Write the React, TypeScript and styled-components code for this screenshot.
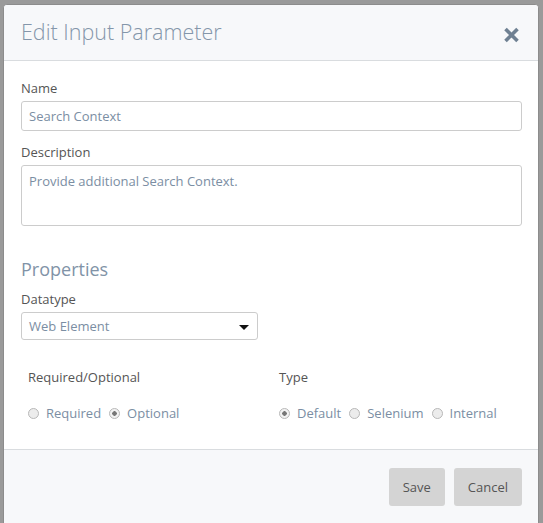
import React from 'react'
import styled, { createGlobalStyle } from 'styled-components'

const GlobalStyle = createGlobalStyle`
  body {
    margin: 0;
    background: #9a9a9a;
    font-family: 'Open Sans', 'Liberation Sans', sans-serif;
  }
`

const Radio: React.FC<{ label: string; checked?: boolean }> = ({ label, checked }) => (
  <RadioItem>
    <RadioDot checked={checked} />
    <RadioText>{label}</RadioText>
  </RadioItem>
)

export default function App() {
  return (
    <>
      <GlobalStyle />
      <Modal>
        <Header>
          <Title>Edit Input Parameter</Title>
          <Close aria-label='close'>
            <svg width='17' height='16' viewBox='0 0 17 16'>
              <path d='M2.5 2 L14.5 14 M14.5 2 L2.5 14' stroke='#6f8092' strokeWidth='3.6' strokeLinecap='butt' />
            </svg>
          </Close>
        </Header>
        <Body>
          <Label>Name</Label>
          <TextInput defaultValue='Search Context' />
          <Label>Description</Label>
          <TextArea defaultValue='Provide additional Search Context.' />
          <Section>Properties</Section>
          <Label>Datatype</Label>
          <Select>
            <span>Web Element</span>
            <Caret />
          </Select>
          <Options>
            <Group>
              <GroupLabel>Required/Optional</GroupLabel>
              <RadioRow>
                <Radio label='Required' />
                <Radio label='Optional' checked />
              </RadioRow>
            </Group>
            <Group>
              <GroupLabel>Type</GroupLabel>
              <RadioRow>
                <Radio label='Default' checked />
                <Radio label='Selenium' />
                <Radio label='Internal' />
              </RadioRow>
            </Group>
          </Options>
        </Body>
        <Footer>
          <Button>Save</Button>
          <Button>Cancel</Button>
        </Footer>
      </Modal>
    </>
  )
}

const Modal = styled.div`
  margin: 4px 4px 0 3px;
  width: 534px;
  height: 530px;
  background: #fff;
  border: 1px solid #8c8c8c;
  border-radius: 4px;
  display: flex;
  flex-direction: column;
  overflow: hidden;
`

const Header = styled.div`
  height: 55px;
  background: #f7f8fa;
  border-bottom: 1px solid #d9dcdf;
  display: flex;
  align-items: center;
  justify-content: space-between;
  padding: 0 18px 0 17px;
`

const Title = styled.h4`
  margin: 0 0 2px;
  font-size: 21.5px;
  font-weight: 300;
  color: #8496aa;
`

const Close = styled.span`
  display: flex;
  margin-top: 4px;
`

const Body = styled.div`
  padding: 18px 16px 0 17px;
  height: 370px;
`

const Label = styled.div`
  font-size: 13px;
  line-height: 18px;
  color: #555;
  margin-bottom: 4px;
`

const fieldBase = `
  box-sizing: border-box;
  width: 100%;
  border: 1px solid #ccc;
  border-radius: 3px;
  font-family: 'Open Sans', 'Liberation Sans', sans-serif;
  font-size: 13px;
  color: #7b8ea3;
  padding: 0 7px;
  outline: none;
  background: #fff;
`

const TextInput = styled.input`
  ${fieldBase}
  display: block;
  height: 30px;
  margin-bottom: 12px;
`

const TextArea = styled.textarea`
  ${fieldBase}
  display: block;
  height: 61px;
  padding-top: 6px;
  resize: none;
  margin-bottom: 31px;
`

const Section = styled.div`
  font-size: 18px;
  line-height: 24px;
  color: #8193a7;
  margin-bottom: 9px;
`

const Select = styled.div`
  ${fieldBase}
  width: 237px;
  height: 28px;
  display: flex;
  align-items: center;
  justify-content: space-between;
  padding-right: 8px;
`

const Caret = styled.span`
  width: 0;
  height: 0;
  border-left: 5px solid transparent;
  border-right: 5px solid transparent;
  border-top: 5px solid #111;
  margin-top: 2px;
`

const Options = styled.div`
  display: grid;
  grid-template-columns: 251px 1fr;
  padding: 28px 0 0 7px;
`

const Group = styled.div`
  display: flex;
  flex-direction: column;
  gap: 18px;
`

const GroupLabel = styled.div`
  font-size: 13px;
  line-height: 18px;
  color: #555;
`

const RadioRow = styled.div`
  display: flex;
  gap: 8px;
`

const RadioItem = styled.label`
  display: flex;
  align-items: center;
  gap: 7px;
`

const RadioDot = styled.span<{ checked?: boolean }>`
  box-sizing: border-box;
  width: 11px;
  height: 11px;
  border-radius: 50%;
  border: 1px solid #b8b8b8;
  background: ${p => (p.checked ? 'radial-gradient(circle, #777 0 2px, #f2f2f2 2.5px)' : '#ececec')};
`

const RadioText = styled.span`
  font-size: 13px;
  line-height: 18px;
  color: #7b8ea3;
`

const Footer = styled.div`
  background: #f7f8fa;
  border-top: 1px solid #d9dcdf;
  flex: 1;
  display: flex;
  justify-content: flex-end;
  align-items: flex-start;
  gap: 9px;
  padding: 18px 16px 0 0;
`

const Button = styled.button`
  height: 38px;
  padding: 0 14px;
  border: none;
  border-radius: 3px;
  background: #d4d4d4;
  color: #555;
  font-family: 'Open Sans', 'Liberation Sans', sans-serif;
  font-size: 13px;
`
